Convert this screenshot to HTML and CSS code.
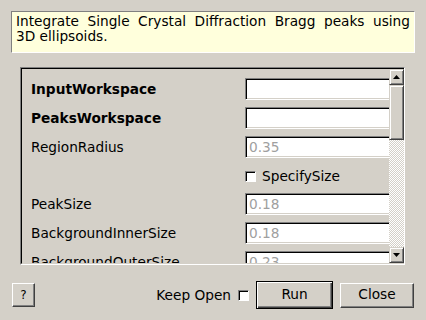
FILE: index.html
```html
<html>
    <head>
        <meta charset="utf-8">
        <title>IntegrateEllipsoids</title>
        <link rel="stylesheet" href="styles.css">
    </head>
    <body>
        <div class="dialog">
            <div class="desc">
                <div class="desc-first">Integrate Single Crystal Diffraction Bragg peaks using</div>
                <div>3D ellipsoids.</div>
            </div>
            <div class="panel">
                <div class="frame">
                    <div class="fields">
                        <div class="row">
                            <span class="name req">InputWorkspace</span>
                            <div class="edit"></div>
                        </div>
                        <div class="row">
                            <span class="name req">PeaksWorkspace</span>
                            <div class="edit"></div>
                        </div>
                        <div class="row">
                            <span class="name">RegionRadius</span>
                            <div class="edit hint">0.35</div>
                        </div>
                        <div class="row row-check">
                            <span class="name"></span>
                            <div class="check-wrap"><span class="check"></span>SpecifySize</div>
                        </div>
                        <div class="row">
                            <span class="name">PeakSize</span>
                            <div class="edit hint">0.18</div>
                        </div>
                        <div class="row">
                            <span class="name">BackgroundInnerSize</span>
                            <div class="edit hint">0.18</div>
                        </div>
                        <div class="row">
                            <span class="name">BackgroundOuterSize</span>
                            <div class="edit hint">0.23</div>
                        </div>
                    </div>
                    <div class="vscroll">
                        <div class="sbtn">
                            <svg width="7" height="4" viewBox="0 0 7 4"><polygon points="3.5,0 7,4 0,4" fill="#000"/></svg>
                        </div>
                        <div class="thumb"></div>
                        <div class="trough"></div>
                        <div class="sbtn">
                            <svg width="7" height="4" viewBox="0 0 7 4"><polygon points="0,0 7,0 3.5,4" fill="#000"/></svg>
                        </div>
                    </div>
                </div>
            </div>
            <div class="buttons">
                <div class="btn btn-help">?</div>
                <div class="spacer"></div>
                <span class="keep">Keep Open</span>
                <span class="check"></span>
                <div class="btn btn-default">Run</div>
                <div class="btn btn-close">Close</div>
            </div>
        </div>
    </body>
</html>
```

FILE: styles.css
```css
body {
    margin: 0;
    background-color: #d4d0c8;
    color: #000;
    font-family: "DejaVu Sans", sans-serif;
    font-size: 13.7px;
}
.dialog {
    width: 426px;
    height: 320px;
    overflow: hidden;
}
.desc {
    box-sizing: border-box;
    margin: 11px 11px 0 11px;
    height: 42px;
    padding: 2px 4px 0 4px;
    background-color: #ffffdc;
    border: 1px solid;
    border-color: #808080 #ffffff #ffffff #808080;
    line-height: 15px;
}
.desc-first {
    text-align: justify;
    text-align-last: justify;
}
.panel {
    box-sizing: border-box;
    margin: 14px 0 0 20px;
    width: 385px;
    height: 198px;
    border: 1px solid;
    border-color: #808080 #ffffff #ffffff #808080;
}
.frame {
    box-sizing: border-box;
    height: 100%;
    display: flex;
    border-top: 1px solid #000;
    border-left: 1px solid #000;
    border-bottom: 1px solid #d4d0c8;
}
.fields {
    flex: 1;
    overflow: hidden;
    padding: 9px 0 0 9px;
}
.row {
    display: grid;
    grid-template-columns: 214px 170px;
    align-items: center;
    height: 22px;
    margin-bottom: 7px;
}
.row-check {
    height: 21px;
}
.name {
    white-space: nowrap;
}
.req {
    font-weight: bold;
}
.edit {
    box-sizing: border-box;
    height: 22px;
    background-color: #fff;
    border: 1px solid;
    border-color: #808080 #ffffff #ffffff #808080;
    box-shadow: inset 1px 1px 0 #000, inset -1px -1px 0 #d4d0c8;
    padding: 0 0 0 3px;
    line-height: 20px;
}
.hint {
    color: #a0a0a0;
}
.check-wrap {
    display: flex;
    align-items: center;
    gap: 6px;
    padding-top: 1px;
}
.check {
    box-sizing: border-box;
    display: inline-block;
    width: 11px;
    height: 11px;
    background-color: #fff;
    border: 1px solid;
    border-color: #808080 #ffffff #ffffff #808080;
    box-shadow: inset 1px 1px 0 #000;
}
.vscroll {
    width: 15px;
    display: flex;
    flex-direction: column;
}
.sbtn {
    box-sizing: border-box;
    height: 16px;
    display: flex;
    align-items: center;
    justify-content: center;
    background-color: #d4d0c8;
    border: 1px solid;
    border-color: #d4d0c8 #404040 #404040 #d4d0c8;
    box-shadow: inset 1px 1px 0 #fff, inset -1px -1px 0 #808080;
}
.thumb {
    box-sizing: border-box;
    height: 55px;
    background-color: #d4d0c8;
    border: 1px solid;
    border-color: #d4d0c8 #404040 #404040 #d4d0c8;
    box-shadow: inset 1px 1px 0 #fff, inset -1px -1px 0 #808080;
}
.trough {
    flex: 1;
    background-color: #d4d0c8;
    background-image: repeating-conic-gradient(#ffffff 0 25%, #d4d0c8 0 50%);
    background-size: 2px 2px;
}
.buttons {
    display: flex;
    align-items: center;
    height: 28px;
    margin: 16px 12px 0 12px;
}
.spacer {
    flex: 1;
}
.btn {
    box-sizing: border-box;
    height: 25px;
    display: flex;
    align-items: center;
    justify-content: center;
    background-color: #d4d0c8;
    border: 1px solid;
    border-color: #ffffff #404040 #404040 #ffffff;
    box-shadow: inset -1px -1px 0 #808080;
    line-height: 1;
}
.btn-help {
    width: 23px;
    height: 24px;
    font-size: 12px;
}
.keep {
    margin-right: 7px;
}
.btn-default {
    width: 77px;
    height: 28px;
    margin-left: 7px;
    border: 1px solid #000;
    box-shadow: inset 1px 1px 0 #fff, inset -1px -1px 0 #404040, inset -2px -2px 0 #808080;
}
.btn-close {
    width: 74px;
    margin-left: 7px;
}
```
